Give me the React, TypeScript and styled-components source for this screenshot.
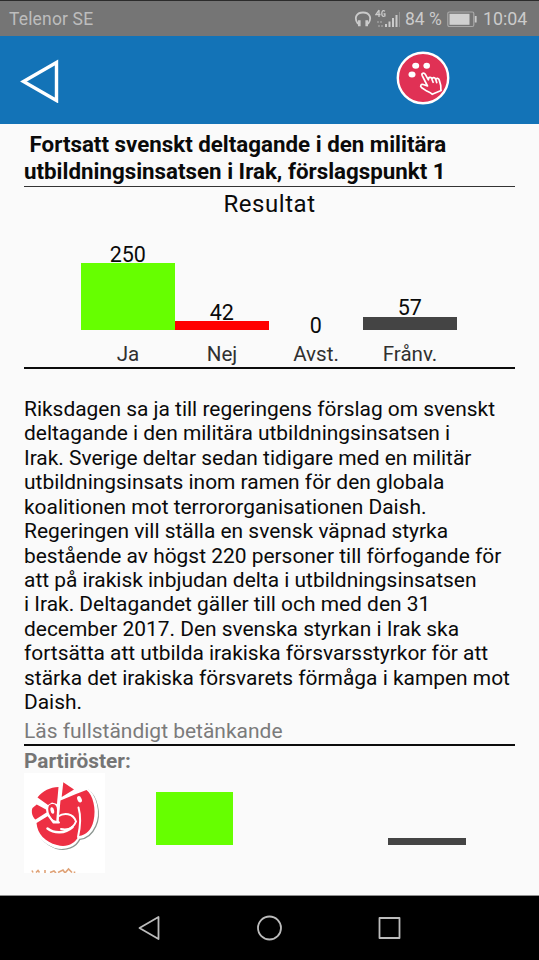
import React from "react";
import styled, { createGlobalStyle } from "styled-components";

const GlobalStyle = createGlobalStyle`
  *, *::before, *::after { box-sizing: border-box; }
  body { margin: 0; background: #fafafa; font-family: Roboto, sans-serif; }
`;

const Screen = styled.div`
  display: flex;
  flex-direction: column;
  width: 539px;
  height: 960px;
  overflow: hidden;
  background: #fafafa;
`;

const StatusBar = styled.div`
  display: flex;
  align-items: center;
  flex: 0 0 36px;
  padding: 1px 12px 0 9px;
  border-top: 1px solid #2b2b2b;
  background: #757575;
  color: #bdbdbd;
  font-size: 17.5px;
  line-height: 20px;
`;

const Carrier = styled.span`
  flex: 1;
  letter-spacing: 0.16px;
`;

const StatusIcons = styled.div`
  display: flex;
  align-items: center;
  gap: 3px;
`;

const StatusText = styled.span<{ $left: number; $width: number; $size: number }>`
  margin-left: ${(p) => p.$left}px;
  width: ${(p) => p.$width}px;
  font-size: ${(p) => p.$size}px;
  white-space: nowrap;
  color: #cbcbcb;
`;

const Header = styled.header`
  display: flex;
  align-items: center;
  justify-content: space-between;
  flex: 0 0 88px;
  padding: 0 88px 0 20px;
  background: #1373b7;
`;

const IconButton = styled.button<{ $raise?: number }>`
  display: flex;
  margin: 0 0 ${(p) => p.$raise ?? 0}px;
  padding: 0;
  border: 0;
  background: none;
`;

const Content = styled.main`
  display: flex;
  flex-direction: column;
  flex: 0 0 772px;
  padding: 7px 24px 0;
  color: #0a0a0a;
  border-bottom: 1px solid #8f8f8f;
`;

const Title = styled.h1`
  flex: 0 0 55px;
  margin: 0;
  font-size: 22.33px;
  font-weight: 700;
  line-height: 26.5px;
`;

const Line = styled.span`
  display: block;
  white-space: pre;
`;

const Rule = styled.div<{ $weight: number }>`
  flex: 0 0 ${(p) => p.$weight}px;
  background: ${(p) => (p.$weight > 1 ? "#0c0c0c" : "#333")};
`;

const ResultHeading = styled.h2`
  flex: 0 0 34px;
  margin: 0;
  text-align: center;
  font-size: 24px;
  font-weight: 400;
  line-height: 34px;
  letter-spacing: 0.55px;
`;

const Chart = styled.div`
  display: grid;
  grid-template-columns: repeat(4, 94px);
  grid-template-rows: 109px 37px;
  flex: 0 0 146px;
  padding-left: 57px;
`;

const Column = styled.div`
  display: flex;
  flex-direction: column;
  justify-content: flex-end;
  align-items: center;
  padding-right: 0.5px;
`;

const Value = styled.span<{ $gap: number }>`
  margin-bottom: ${(p) => p.$gap}px;
  font-size: 21.5px;
  line-height: 17px;
`;

const Bar = styled.div<{ $height: number; $color: string; $width?: number }>`
  width: ${(p) => (p.$width ? `${p.$width}px` : "100%")};
  height: ${(p) => p.$height}px;
  background: ${(p) => p.$color};
`;

const Label = styled.span`
  padding-top: 12px;
  text-align: center;
  font-size: 20.6px;
  line-height: 24px;
  color: #303030;
`;

const Summary = styled.p`
  flex: 0 0 auto;
  margin: 28px 0 0;
  font-size: 20.93px;
  line-height: 24.42px;
`;

const ReportLink = styled.a`
  height: 29.5px;
  font-size: 20.98px;
  line-height: 34px;
  color: #7b7b7b;
`;

const PartyHeading = styled.h3`
  height: 27px;
  margin: 0;
  font-size: 20.85px;
  font-weight: 700;
  line-height: 30px;
  color: #757575;
`;

const PartyRow = styled.div`
  display: grid;
  grid-template-columns: 81px 51px 77px 77px 78px 78px;
  align-items: end;
  flex: 0 0 100px;
  overflow: hidden;
`;

const LogoBox = styled.div`
  display: flex;
  width: 81px;
  height: 100px;
  background: #fff;
`;

const PartyCell = styled.div<{ $column: number }>`
  grid-column: ${(p) => p.$column};
  padding-bottom: 28px;
`;

const NavBar = styled.nav`
  display: grid;
  grid-template-columns: repeat(3, 120px);
  justify-content: center;
  justify-items: center;
  align-items: center;
  flex: 0 0 64px;
  background: #000;
`;

const summary = [
  "Riksdagen sa ja till regeringens förslag om svenskt",
  "deltagande i den militära utbildningsinsatsen i",
  "Irak. Sverige deltar sedan tidigare med en militär",
  "utbildningsinsats inom ramen för den globala",
  "koalitionen mot terrororganisationen Daish.",
  "Regeringen vill ställa en svensk väpnad styrka",
  "bestående av högst 220 personer till förfogande för",
  "att på irakisk inbjudan delta i utbildningsinsatsen",
  "i Irak. Deltagandet gäller till och med den 31",
  "december 2017. Den svenska styrkan i Irak ska",
  "fortsätta att utbilda irakiska försvarsstyrkor för att",
  "stärka det irakiska försvarets förmåga i kampen mot",
  "Daish.",
];

const results = [
  { label: "Ja", votes: 250, height: 67, gap: 0, color: "#66ff00" },
  { label: "Nej", votes: 42, height: 9, gap: 0, color: "#ff0000" },
  { label: "Avst.", votes: 0, height: 0, gap: -4, color: "#ffff00" },
  { label: "Frånv.", votes: 57, height: 13, gap: 1, color: "#444444" },
];

const Headphones = () => (
  <svg width="18" height="18" viewBox="0 0 18 18" fill="none" stroke="#cbcbcb">
    <path d="M4 14C-.2 8.500 2 2.500 9 2.500s9.200 6 5 11.500" strokeWidth="1.800" />
    <path d="M5.300 10.300v5.900M12.700 10.300v5.900" strokeWidth="2.600" />
  </svg>
);

const Signal = () => (
  <svg width="26" height="20" viewBox="0 0 26 20" fill="#cbcbcb">
    <path d="M4 1 1 5.500h4.500M4 1v7" fill="none" stroke="#cbcbcb" strokeWidth="1.300" />
    <path d="M10 2.200C7.500.8 6.800 2.600 6.800 4.500s.6 3.600 3.100 2.500V4.800H8.500" fill="none" stroke="#cbcbcb" strokeWidth="1.300" />
    <path d="M10 15h2v3h-2zM13.500 12.500h2V18h-2zM17 9h2v9h-2zM20.500 6h2v12h-2z" />
    <path d="M24 3h1v15h-1zM2 12h2v2H2zM5 12h2v2H5zM3 16h2v2H3zM6 16h2v2H6z" opacity=".35" />
  </svg>
);

const Battery = () => (
  <svg width="31" height="17" viewBox="0 0 31 17">
    <rect x=".8" y="1" width="26" height="14.500" rx="1.500" fill="none" stroke="#a9a9a9" strokeWidth="1.200" />
    <rect x="2.500" y="2.800" width="20" height="11" fill="#d0d0d0" />
    <path d="M28.700 5v6.500" stroke="#cbcbcb" strokeWidth="1.800" />
  </svg>
);

const BackArrow = () => (
  <svg width="42" height="46" viewBox="0 0 42 46" fill="none">
    <path d="M3.500 24.500 36.500 5.500v38z" stroke="#fff" strokeWidth="3.400" />
  </svg>
);

const VoteLogo = () => (
  <svg width="56" height="56" viewBox="0 0 56 56">
    <circle cx="28" cy="28" r="25.200" fill="#e03155" stroke="#fff" strokeWidth="2.400" />
    <g fill="#fff">
      <ellipse cx="20.700" cy="15.800" rx="3.500" ry="3" />
      <ellipse cx="31.700" cy="15.800" rx="3.300" ry="3" />
      <ellipse cx="17" cy="24.400" rx="3.500" ry="3" />
    </g>
    <path
      d="M32.500 36 27.200 25.600c-1-2.200 1.700-3.500 3-1.400l3.200 5.600c-.3-3 2.900-3.200 3.600-.8.600-2.100 3.200-1.800 3.700.5.700-1.700 3-1.400 3.500.5l1.500 5.300c.3 1.800-.2 3.200.4 5.200l-8.900 3.800c-1.400-1.600-3.200-2.200-5.400-3.200l-5.400-3.600c-1.700-1.600-.2-3.700 1.800-3zM37 29.500l1.100 2.800M40.900 30l.8 2.600"
      fill="none"
      stroke="#fff"
      strokeWidth="1.700"
      strokeLinejoin="round"
      strokeLinecap="round"
    />
  </svg>
);

const PartyLogo = () => (
  <svg width="81" height="100" viewBox="0 0 81 100">
    <path
      d="M12 22C18 15 26 12.500 35.500 12L38.500 7 51 14.500 62 15.500C72 22 76 40 70.500 52 67 60 61 64.500 54.500 65 51 73 41 77 31 74 20 70 12.500 62 11 50L6.500 36 13 30z"
      fill="#8d9792"
      stroke="#8d9792"
      strokeWidth="1.500"
      strokeLinejoin="round"
      transform="translate(1.200 1.200)"
    />
    <path
      d="M12 22C18 15 26 12.500 35.500 12L38.500 7 51 14.500 62 15.500C72 22 76 40 70.500 52 67 60 61 64.500 54.500 65 51 73 41 77 31 74 20 70 12.500 62 11 50L6.500 36 13 30z"
      fill="#fff"
      stroke="#fff"
      strokeWidth="2"
      strokeLinejoin="round"
    />
    <g fill="#ed2f43">
      <path d="M13.500 24.500C19 17.500 26 14.500 34.500 14L33 31 28 29.500 24 32z" />
      <path d="M39.300 9.300 50 16.500 37.700 24z" />
      <path d="M36.500 27.500 52 21 62.500 17C69 22 72.500 36 69.500 48 67.500 57 62 62 55 63L34.500 48z" />
      <path d="M12.700 31.500 22 36.500 22.500 39.500 11.500 46.500C8 44 7 38 8.500 35z" />
      <path d="M12.500 50 24 43 30 49.500 35 49C37 43 46 43 53 50L54.500 63C51 71 42 75 33 72 21 69 13.500 61 12.500 50z" />
      <path d="M25 32.500C29 29.500 33 31.500 33 36.500L32.500 48 29.500 47C25 43 23 37 25 32.500z" />
    </g>
    <g fill="none" stroke="#fff" strokeWidth="2" strokeLinecap="round">
      <path d="M34 43.500C40 39.500 49 40 52 48.500 50 54 45 57.500 37 56M54.500 34.500C57 43 56.500 53 54 64" />
      <path d="M23.500 55.500C30 60.500 41 61 48.500 54" strokeWidth="2.500" />
      <path d="M35 24.500 33.500 49M24 42 29.500 49.500H35" />
    </g>
    <ellipse cx="28.300" cy="37.500" rx="1.800" ry="3.300" fill="#fff" transform="rotate(-12 28.300 37.500)" />
    <ellipse cx="55.500" cy="26.300" rx="2.100" ry="3.300" fill="#fff" transform="rotate(-25 55.500 26.300)" />
    <path
      d="M8 97.500 9 99.500M12 99.500l2-2 1.500 2M21 97v3M26 99.500l4-1.500 2 2M34 99.500l5-2.500 2 3 3.500-4 3.500 3.500M50.500 98.500v1.500"
      fill="none"
      stroke="#dfa277"
      strokeWidth="1.600"
    />
  </svg>
);

const NavIcon = ({ d }: { d: string }) => (
  <svg width="26" height="26" viewBox="0 0 26 26" fill="none" stroke="#bcbcbc" strokeWidth="1.800" strokeLinejoin="round">
    <path d={d} />
  </svg>
);

export default function App() {
  return (
    <Screen>
      <GlobalStyle />
      <StatusBar>
        <Carrier>Telenor SE</Carrier>
        <StatusIcons>
          <Headphones />
          <Signal />
        </StatusIcons>
        <StatusText $left={4} $width={42} $size={17.5}>84 %</StatusText>
        <Battery />
        <StatusText $left={5} $width={44} $size={17.8}>10:04</StatusText>
      </StatusBar>
      <Header>
        <IconButton aria-label="Tillbaka"><BackArrow /></IconButton>
        <IconButton aria-label="Rösta" $raise={5}><VoteLogo /></IconButton>
      </Header>
      <Content>
        <Title>
          <Line> Fortsatt svenskt deltagande i den militära</Line>
          <Line>utbildningsinsatsen i Irak, förslagspunkt 1</Line>
        </Title>
        <Rule $weight={1} />
        <ResultHeading>Resultat</ResultHeading>
        <Chart>
          {results.map((r) => (
            <Column key={r.label}>
              <Value $gap={r.gap}>{r.votes}</Value>
              <Bar $height={r.height} $color={r.color} />
            </Column>
          ))}
          {results.map((r) => (
            <Label key={r.label}>{r.label}</Label>
          ))}
        </Chart>
        <Rule $weight={2} />
        <Summary>
          {summary.map((text) => (
            <Line key={text}>{text}</Line>
          ))}
        </Summary>
        <ReportLink>Läs fullständigt betänkande</ReportLink>
        <Rule $weight={2} />
        <PartyHeading>Partiröster:</PartyHeading>
        <PartyRow>
          <LogoBox><PartyLogo /></LogoBox>
          <PartyCell $column={3}><Bar $height={53} $color="#66ff00" $width={77} /></PartyCell>
          <PartyCell $column={6}><Bar $height={7} $color="#444444" $width={78} /></PartyCell>
        </PartyRow>
      </Content>
      <NavBar>
        <NavIcon d="M2.500 13 21.500 2v22z" />
        <NavIcon d="M12.500 1.500a11.500 11.500 0 1 1 0 23 11.500 11.500 0 0 1 0-23z" />
        <NavIcon d="M2.500 3h20v20h-20z" />
      </NavBar>
    </Screen>
  );
}
